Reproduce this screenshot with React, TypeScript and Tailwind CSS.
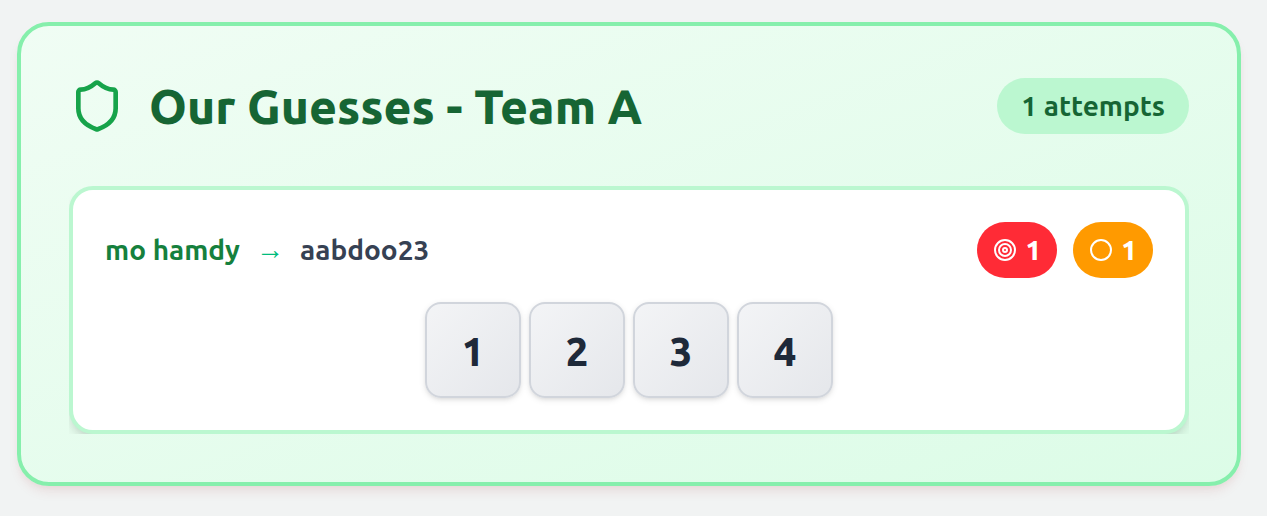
import { Circle, Shield, Target } from "lucide-react";

type Guess = {
  from: string;
  to: string;
  digits: number[];
  exact: number;
  misplaced: number;
};

const guesses: Guess[] = [
  { from: "mo hamdy", to: "aabdoo23", digits: [1, 2, 3, 4], exact: 1, misplaced: 1 },
];

function GuessCard({ guess }: { guess: Guess }) {
  return (
    <li className="rounded-3xl border-4 border-[#bbf7d0] bg-white p-8 shadow-[0_8px_12px_-2px_rgba(0,0,0,0.1),0_4px_8px_-4px_rgba(0,0,0,0.1)]">
      <div className="mb-6 flex flex-wrap items-center justify-between gap-4">
        <div className="flex items-center gap-4 text-[28px] leading-10 font-semibold">
          <span className="text-[#15803d]">{guess.from}</span>
          <span className="font-['Liberation_Sans',sans-serif] font-normal text-[#00bc7d]">→</span>
          <span className="text-[#364153]">{guess.to}</span>
        </div>
        <div className="flex gap-4 text-[28px] leading-10 font-extrabold text-white">
          <span className="flex items-center gap-2 rounded-full bg-[#ff2b36] px-4 py-2">
            <Target size={24} aria-hidden="true" />
            {guess.exact}
          </span>
          <span className="flex items-center gap-2 rounded-full bg-[#ff9a00] px-4 py-2">
            <Circle size={24} aria-hidden="true" />
            {guess.misplaced}
          </span>
        </div>
      </div>
      <div className="flex justify-center gap-2">
        {guess.digits.map((digit, index) => (
          <span
            key={index}
            className="flex size-24 items-center justify-center rounded-2xl border-2 border-[#d1d5dc] bg-linear-to-br/srgb from-[#f3f4f6] to-[#e5e7eb] pt-1 text-[40px] leading-14 font-extrabold text-[#1e2939] shadow-[0_2px_6px_rgba(0,0,0,0.1),0_2px_4px_-2px_rgba(0,0,0,0.1)]"
          >
            {digit}
          </span>
        ))}
      </div>
    </li>
  );
}

export default function App() {
  return (
    <main className="min-h-screen bg-[#f1f3f3] pt-[22px] pr-[26px] pb-[30px] pl-[17px] font-['Ubuntu','Noto_Sans',sans-serif]">
      <section className="rounded-[32px] border-4 border-[#86efac] bg-linear-to-br/srgb from-[#f0fdf4] to-[#dcfce7] p-12 shadow-[0_8px_12px_-2px_rgba(160,30,30,0.08),0_4px_8px_-4px_rgba(160,30,30,0.08)]">
        <header className="mb-12 flex flex-wrap items-center justify-between gap-4">
          <div className="flex items-center gap-6">
            <Shield size={56} className="text-[#16a34a]" aria-hidden="true" />
            <h2 className="text-5xl leading-16 font-extrabold text-[#166534]">Our Guesses - Team A</h2>
          </div>
          <span className="rounded-full bg-[#bbf7d0] px-6 py-2 text-[28px] leading-10 font-semibold text-[#166534]">
            {guesses.length} attempts
          </span>
        </header>
        <ul className="flex flex-col gap-6 overflow-hidden">
          {guesses.map((guess, index) => (
            <GuessCard key={index} guess={guess} />
          ))}
        </ul>
      </section>
    </main>
  );
}
